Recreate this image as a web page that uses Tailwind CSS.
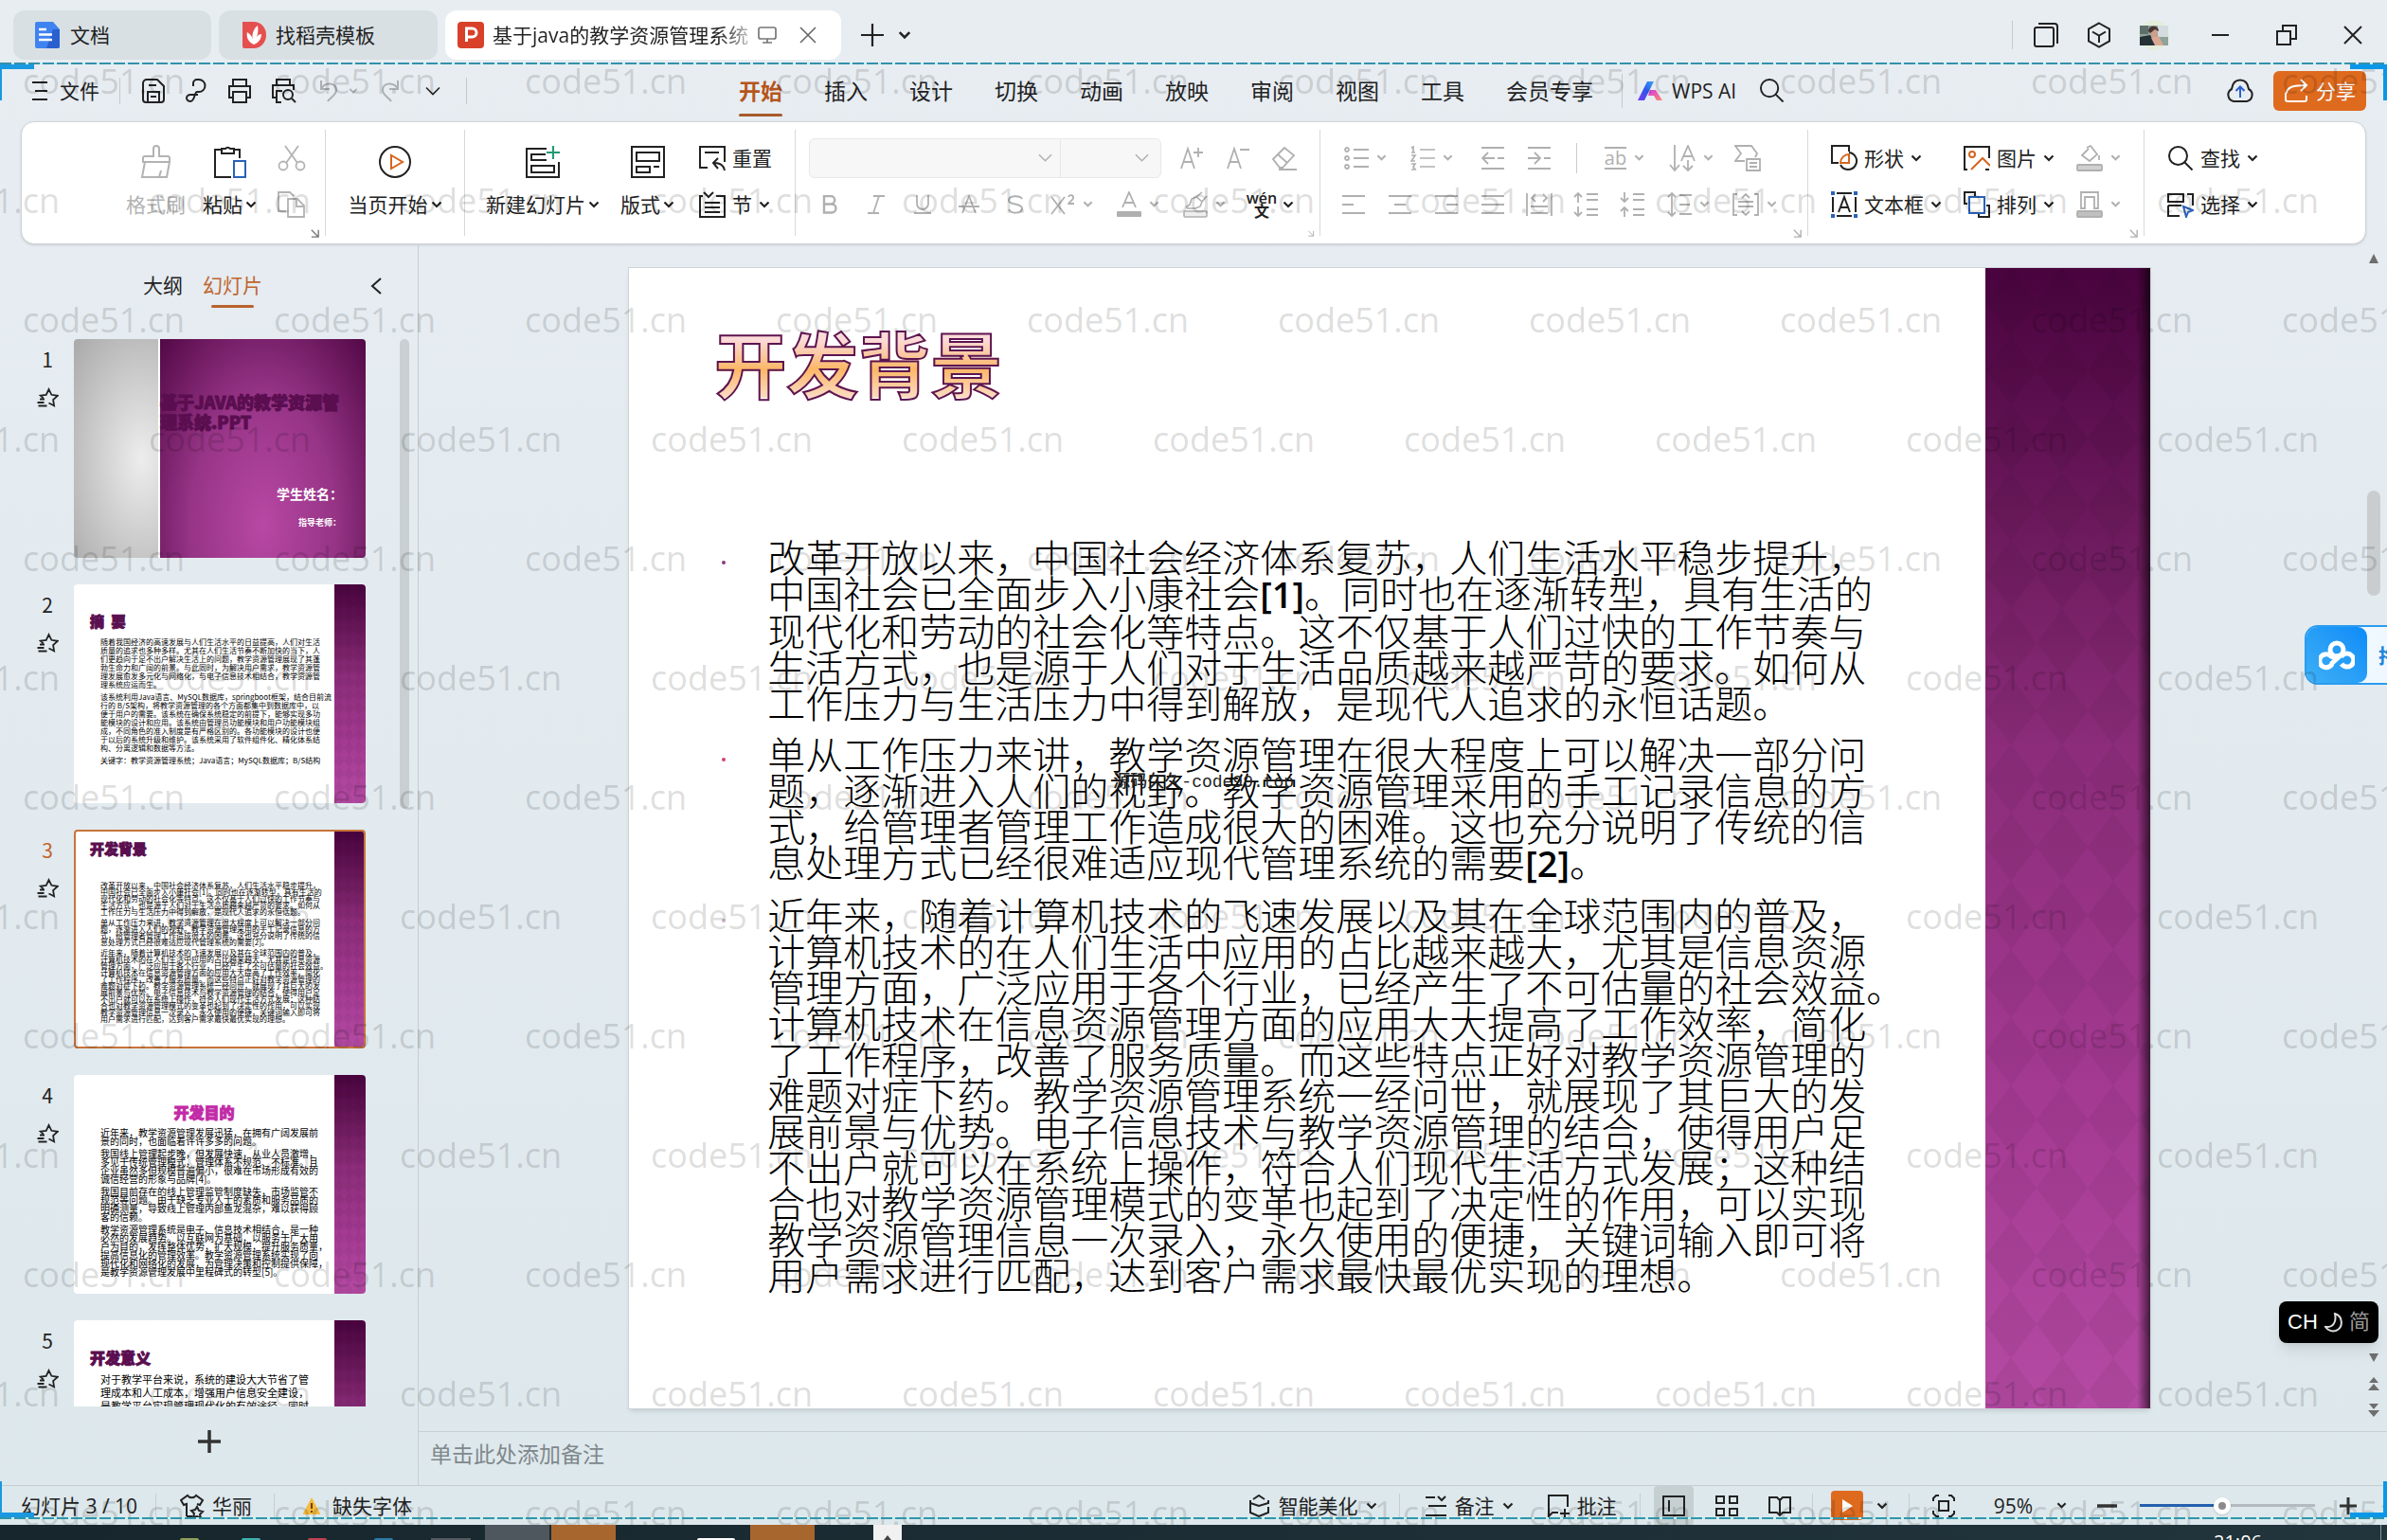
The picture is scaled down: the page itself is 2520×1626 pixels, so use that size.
<!DOCTYPE html>
<html lang="zh-CN">
<head>
  <meta charset="UTF-8" />
  <meta name="viewport" content="width=device-width, initial-scale=1.0"/>
  <title>基于java的教学资源管理系统 - WPS</title>
  <script src="https://cdn.jsdelivr.net/npm/@tailwindcss/browser@4"></script>
</head>
<body class="relative h-screen overflow-hidden flex flex-col bg-linear-to-b from-[#e8edf2] to-[#dde8ec] font-['Open_Sans','Noto_Sans_CJK_SC',sans-serif] text-[21px] leading-[28px] text-[#222]">

  <!-- Icon sprite -->
  <svg class="absolute size-0">
    <symbol id="chev" viewBox="0 0 12 12"><path d="M1.5 3.5 6 8l4.500-4.500" fill="none" stroke="currentColor" stroke-width="2.200"/></symbol>
    <symbol id="chev-thin" viewBox="0 0 16 16"><path d="M1 4.500 8 11.500l7-7" fill="none" stroke="currentColor" stroke-width="1.600"/></symbol>
    <symbol id="corner" viewBox="0 0 12 12"><path d="M2 2l8 8M10 2v8H2" fill="none" stroke="currentColor" stroke-width="1.500"/></symbol>
    <symbol id="star" viewBox="0 0 24 22"><path d="M17.500 18.500l1.600.9-1-6.300 4.700-4.300-6.400-1L13.500 2l-2.800 5.800-6 .8 3 2.800M17.500 18.500l-4-2M4 12.500h5M1.500 16h7M2.500 19.500h9" fill="none" stroke="currentColor" stroke-width="1.800"/></symbol>
    <symbol id="search" viewBox="0 0 28 28"><circle cx="11.500" cy="11.500" r="9.500" fill="none" stroke="currentColor" stroke-width="2"/><path d="M18.500 18.500l8 8" stroke="currentColor" stroke-width="2"/></symbol>
    <symbol id="band" viewBox="0 0 174 1205" preserveAspectRatio="none">
      <defs>
        <linearGradient id="bandFill" x1="0" y1="0" x2="0" y2="1">
          <stop offset="0" stop-color="#49033e"/><stop offset=".25" stop-color="#701c60"/><stop offset=".42" stop-color="#8c2c7a"/><stop offset=".75" stop-color="#a63b94"/><stop offset="1" stop-color="#b44aa3"/>
        </linearGradient>
        <pattern id="diamonds" width="54" height="72" patternUnits="userSpaceOnUse"><path d="M27 0l27 36-27 36L0 36z" fill="#000" fill-opacity=".05"/></pattern>
      </defs>
      <path d="M0 0h174v1205H0z" fill="url(#bandFill)"/>
      <path d="M0 0h174v1205H0z" fill="url(#diamonds)"/>
    </symbol>
  </svg>

  <!-- Document tabs -->
  <header class="h-[66px] shrink-0 flex items-center pt-[8px] pl-[14px] pr-[26px]">
    <button class="w-[209px] h-[52px] flex items-center pl-[21px] gap-[9px] rounded-xl bg-[#d9e0e4]">
      <svg class="w-[30px] h-[30px]" viewBox="0 0 30 30"><path d="M4 1h17l7 8v18a2 2 0 0 1-2 2H4a2 2 0 0 1-2-2V3a2 2 0 0 1 2-2z" fill="#3f83f0"/><path d="M21 9h7v18a2 2 0 0 1-2 2H14z" fill="#2a5fcf"/><path d="M6 9h8M6 14.500h14M6 20h14" stroke="#fff" stroke-width="2.400"/></svg>
      文档
    </button>
    <button class="ml-2 w-[231px] h-[52px] flex items-center pl-[23px] gap-[9px] rounded-xl bg-[#d9e0e4]">
      <svg class="w-[28px] h-[30px]" viewBox="0 0 28 30"><path d="M2 1h12a13 14 0 0 1 0 28H4a2 2 0 0 1-2-2z" fill="#e5504f"/><path d="M14 25c-7-3-8-9-7-13 3 2 5 4 5.500 7C12 13 14 8 18 5c1 6 0 9-1 12 1-2 3-3 5-3 0 5-3 9-8 11z" fill="#fff"/></svg>
      找稻壳模板
    </button>
    <div class="ml-2 w-[418px] h-[52px] flex items-center pl-[12px] rounded-xl bg-white">
      <svg class="w-[30px] h-[30px]" viewBox="0 0 30 30"><rect x="1" y="1" width="28" height="28" rx="4" fill="#d8402a"/><path d="M10.500 22V8h6a4.500 4.500 0 0 1 0 9h-6" fill="none" stroke="#fff" stroke-width="3"/></svg>
      <span class="ml-[8px] w-[272px] overflow-hidden whitespace-nowrap bg-linear-to-r from-[#222] from-88% to-[#ccc] bg-clip-text text-transparent">基于java的教学资源管理系统</span>
      <svg class="ml-[8px] w-[20px] h-[20px] text-[#777]" viewBox="0 0 20 20" fill="none" stroke="currentColor" stroke-width="1.700"><rect x="1" y="2" width="18" height="12" rx="2"/><path d="M10 14v4M5 18h10"/></svg>
      <button aria-label="关闭" class="ml-[24px]"><svg class="w-[18px] h-[18px] text-[#666]" viewBox="0 0 18 18" stroke="currentColor" stroke-width="1.600"><path d="M1 1l16 16M17 1L1 17"/></svg></button>
    </div>
    <button aria-label="新建" class="ml-[20px]"><svg class="w-[26px] h-[26px]" viewBox="0 0 26 26" stroke="currentColor" stroke-width="2.200"><path d="M13 1v24M1 13h24"/></svg></button>
    <svg class="ml-[14px] w-[14px] h-[14px]"><use href="#chev"/></svg>
    <div class="ml-auto flex items-center">
      <span class="w-px h-[30px] bg-[#c3c9cd]"></span>
      <button aria-label="窗口" class="ml-[21px]"><svg class="w-[28px] h-[28px]" viewBox="0 0 28 28" fill="none" stroke="currentColor" stroke-width="2"><rect x="2" y="6" width="20" height="20" rx="2"/><path d="M6 2h17a3 3 0 0 1 3 3v18"/></svg></button>
      <button aria-label="立方" class="ml-[28px]"><svg class="w-[28px] h-[28px]" viewBox="0 0 28 28" fill="none" stroke="currentColor" stroke-width="2"><path d="M14 1.500l11 6.200v12.600l-11 6.200-11-6.200V7.700zM7 10.500l7 4 7-4M14 14.500V22"/></svg></button>
      <svg class="ml-[28px] w-[32px] h-[36px]" viewBox="0 0 32 36"><circle cx="16" cy="18" r="16" fill="#e4eddc"/><path d="M1 8h30v21H1z" fill="#8fa39a"/><path d="M20 8h11v12H20z" fill="#d5dcdf"/><path d="M1 8h9v9H1z" fill="#5d6f6b"/><path d="M12 14c0-5 8-5 8 1l-1 6h-6z" fill="#caa08c"/><path d="M10 14c0-7 11-7 11 0l-4-2-5 4z" fill="#4a3431"/><path d="M1 20l11-2 6 11H1z" fill="#253036"/><path d="M13 21l8-2 5 10h-9z" fill="#d9a894"/></svg>
      <button aria-label="最小化" class="ml-[44px]"><svg class="w-[20px] h-[20px]" viewBox="0 0 20 20" stroke="currentColor" stroke-width="2"><path d="M1 10h18"/></svg></button>
      <button aria-label="还原" class="ml-[48px]"><svg class="w-[24px] h-[24px]" viewBox="0 0 24 24" fill="none" stroke="currentColor" stroke-width="2"><rect x="2" y="8" width="14" height="14"/><path d="M8 8V2h14v14h-6"/></svg></button>
      <button aria-label="退出" class="ml-[48px]"><svg class="w-[20px] h-[20px]" viewBox="0 0 20 20" stroke="currentColor" stroke-width="2"><path d="M1 1l18 18M19 1L1 19"/></svg></button>
    </div>
  </header>

  <!-- Menu bar -->
  <nav class="h-[62px] shrink-0 flex items-center pl-[34px] pr-[22px] pb-[3px]">
    <button class="flex items-center gap-[13px]">
      <svg class="w-[16px] h-[20px]" viewBox="0 0 16 20" stroke="currentColor" stroke-width="2"><path d="M0 1h16M3 10h13M0 19h16"/></svg>文件
    </button>
    <span class="ml-[21px] w-px h-[28px] bg-[#c3c9cd]"></span>
    <button aria-label="保存" class="ml-[22px]"><svg class="w-[26px] h-[26px]" viewBox="0 0 26 26" fill="none" stroke="currentColor" stroke-width="2"><path d="M6 1h11l7 7v14a3 3 0 0 1-3 3H5a3 3 0 0 1-3-3V5a4 4 0 0 1 4-4zM7 25V14h12v11M8 7h8M10 19h6"/></svg></button>
    <button aria-label="输出" class="ml-[19px]"><svg class="w-[26px] h-[26px]" viewBox="0 0 26 26" fill="none" stroke="currentColor" stroke-width="2"><path d="M10 8V5a4 4 0 0 1 4-4h2a6 6 0 0 1 0 13h-2c-3 0-2 10-7 10a4 3.500 0 0 1 0-7h8"/></svg></button>
    <button aria-label="打印" class="ml-[20px]"><svg class="w-[26px] h-[26px]" viewBox="0 0 26 26" fill="none" stroke="currentColor" stroke-width="2"><path d="M6 8V1h14v7M6 20H2V8h22v12h-4"/><path d="M6 14h14v11H6z"/></svg></button>
    <button aria-label="打印预览" class="ml-[20px]"><svg class="w-[28px] h-[26px]" viewBox="0 0 28 26" fill="none" stroke="currentColor" stroke-width="2"><path d="M6 7V1h14v6M6 20H2V7h22v5M6 20v-7h6M6 20v5h5"/><circle cx="18" cy="17" r="5"/><path d="M22 21l4 4"/></svg></button>
    <button aria-label="撤销" class="ml-[22px] flex items-center gap-[10px] text-[#aab0b4]"><svg class="w-[22px] h-[24px]" viewBox="0 0 22 24" fill="none" stroke="currentColor" stroke-width="2"><path d="M3 1v9h9M3 10c4-8 16-7 16 1 0 6-7 8-9 12"/></svg><svg class="w-[10px] h-[10px]"><use href="#chev"/></svg></button>
    <button aria-label="恢复" class="ml-[23px] text-[#aab0b4]"><svg class="w-[22px] h-[24px]" viewBox="0 0 22 24" fill="none" stroke="currentColor" stroke-width="2"><path d="M19 1v9h-9M19 10C15 2 3 3 3 11c0 6 7 8 9 12"/></svg></button>
    <svg class="ml-[26px] w-[16px] h-[16px]"><use href="#chev-thin"/></svg>
    <span class="ml-[27px] w-px h-[28px] bg-[#c3c9cd]"></span>

    <div class="ml-[287px] flex items-center gap-[44px] text-[23px] whitespace-nowrap">
      <a href="#" class="relative font-bold text-[#b5561c]">开始<span class="absolute left-0 right-0 top-[38px] h-[3px] rounded bg-[#a85a2c]"></span></a>
      <a href="#">插入</a>
      <a href="#">设计</a>
      <a href="#">切换</a>
      <a href="#">动画</a>
      <a href="#">放映</a>
      <a href="#">审阅</a>
      <a href="#">视图</a>
      <a href="#">工具</a>
      <a href="#">会员专享</a>
    </div>
    <span class="ml-[30px] w-px h-[36px] bg-[#c3c9cd]"></span>
    <a href="#" class="ml-[15px] flex items-center gap-[9px] whitespace-nowrap">
      <svg class="w-[28px] h-[22px]" viewBox="0 0 28 22"><defs><linearGradient id="aiBlue" x1="0" y1="1" x2="1" y2="0"><stop stop-color="#7a3bf0"/><stop offset=".5" stop-color="#2f55ee"/><stop offset="1" stop-color="#38a6f5"/></linearGradient><linearGradient id="aiPink" x1="0" y1="0" x2="1" y2="1"><stop stop-color="#d33be0"/><stop offset="1" stop-color="#ff8a70"/></linearGradient></defs><path d="M11 1h7L8 21H1z" fill="url(#aiBlue)"/><path d="M14 10h6l7 11h-6l-3-5h-6z" fill="url(#aiPink)"/></svg>
      WPS AI
    </a>
    <button aria-label="搜索" class="ml-[24px]"><svg class="w-[27px] h-[27px]"><use href="#search"/></svg></button>
    <button aria-label="云同步" class="ml-auto"><svg class="w-[30px] h-[26px]" viewBox="0 0 30 26" fill="none" stroke="currentColor" stroke-width="2"><path d="M8 24a7 7 0 0 1-2-13C7 4 10 1.500 15 1.500S23 4 24 11a7 7 0 0 1-2 13z"/><path d="M15 20V9M10.500 13L15 8.500l4.500 4.500" stroke="#2a5fcf"/></svg></button>
    <button class="ml-[20px] w-[98px] h-[42px] flex items-center justify-center gap-[8px] rounded-md bg-[#de6a1e] text-white">
      <svg class="w-[26px] h-[26px]" viewBox="0 0 26 26" fill="none" stroke="currentColor" stroke-width="2"><path d="M2 15v7a2 2 0 0 0 2 2h18a2 2 0 0 0 2-2v-4M3 15C4 9 9 7 24 7M18 1l6 6-6 6"/></svg>分享
    </button>
  </nav>

  <!-- Ribbon -->
  <section class="h-[130px] shrink-0 mx-[22px] flex rounded-[14px] bg-white border border-[#cfd4d7] shadow-sm whitespace-nowrap">
    <!-- Clipboard -->
    <div class="w-[320px] flex pt-[13px] pl-[110px]">
      <button class="w-[63px] flex flex-col items-center text-[#b3b3b3]">
        <span class="h-[49px] flex items-center pt-[8px]"><svg class="w-[34px] h-[36px]" viewBox="0 0 34 36" fill="none" stroke="currentColor" stroke-width="2"><path d="M14 12V4a3 3 0 0 1 6 0v8h9a2 2 0 0 1 2 2v4H3v-4a2 2 0 0 1 2-2zM5 18L2 34h26l3-16M20 34l2-7"/></svg></span>
        <span class="h-[49px] flex items-center">格式刷</span>
      </button>
      <button class="ml-[18px] flex flex-col items-center">
        <span class="h-[49px] flex items-center pt-[8px]"><svg class="w-[36px] h-[36px]" viewBox="0 0 36 36" fill="none" stroke="currentColor" stroke-width="2"><path d="M9 5H2v29h17M22 5h6v9M9 9V4h4a3 3 0 0 1 5 0h4v5z"/><path d="M22 17h12v17H22z" stroke="#2a62b8"/></svg></span>
        <span class="h-[49px] flex items-center gap-[3px]">粘贴<svg class="w-[12px] h-[12px]"><use href="#chev"/></svg></span>
      </button>
      <div class="ml-[22px] flex flex-col text-[#b3b3b3]">
        <button aria-label="剪切" class="h-[49px]"><svg class="w-[30px] h-[28px]" viewBox="0 0 30 28" fill="none" stroke="currentColor" stroke-width="1.800"><circle cx="6" cy="22" r="4.500"/><circle cx="24" cy="22" r="4.500"/><path d="M8 1l13 18M22 1L9 19"/></svg></button>
        <button aria-label="复制" class="h-[49px]"><svg class="w-[30px] h-[30px]" viewBox="0 0 30 30" fill="none" stroke="currentColor" stroke-width="1.800"><path d="M9 22H1V2h12l4 4M11 9h10l7 7v12H11zM20 9v8h8"/></svg></button>
      </div>
      <svg class="ml-auto mr-[5px] mt-[99px] w-[11px] h-[11px] text-[#777]"><use href="#corner"/></svg>
    </div>
    <span class="w-px my-2 bg-[#d6d9db]"></span>

    <!-- Slideshow -->
    <div class="w-[146px] flex pt-[13px] justify-center">
      <button class="flex flex-col items-center">
        <span class="h-[49px] flex items-center pt-[8px]"><svg class="w-[36px] h-[36px]" viewBox="0 0 36 36" fill="none" stroke="currentColor" stroke-width="2"><circle cx="18" cy="18" r="16"/><path d="M14 11v14l12-7z" stroke="#d4661f"/></svg></span>
        <span class="h-[49px] flex items-center gap-[3px]">当页开始<svg class="w-[12px] h-[12px]"><use href="#chev"/></svg></span>
      </button>
    </div>
    <span class="w-px my-2 bg-[#d6d9db]"></span>

    <!-- Slides -->
    <div class="w-[348px] flex pt-[13px] pl-[22px]">
      <button class="flex flex-col items-center">
        <span class="h-[49px] flex items-center pt-[8px]"><svg class="w-[38px] h-[36px]" viewBox="0 0 38 36" fill="none" stroke="currentColor" stroke-width="2"><path d="M23 4H2v30h34V18M7 22h24v7H7zM22 10H7v6h16"/><path d="M30 1v14M23 8h14" stroke="#1d9a74"/></svg></span>
        <span class="h-[49px] flex items-center gap-[3px]">新建幻灯片<svg class="w-[12px] h-[12px]"><use href="#chev"/></svg></span>
      </button>
      <button class="ml-[22px] flex flex-col items-center">
        <span class="h-[49px] flex items-center pt-[8px]"><svg class="w-[36px] h-[34px]" viewBox="0 0 36 34" fill="none" stroke="currentColor" stroke-width="2"><path d="M1 1h34v32H1zM6 7h24v9H6zM6 22h14v6H6zM24 22h6"/></svg></span>
        <span class="h-[49px] flex items-center gap-[3px]">版式<svg class="w-[12px] h-[12px]"><use href="#chev"/></svg></span>
      </button>
      <div class="ml-[26px] flex flex-col items-start">
        <button class="h-[49px] flex items-center gap-[7px]"><svg class="w-[28px] h-[28px]" viewBox="0 0 28 28" fill="none" stroke="currentColor" stroke-width="2"><path d="M9 24H1V2h26v16M6 8h15M27 27c-1-6-5-8-11-8M20 14l-5 5 5 6"/></svg>重置</button>
        <button class="h-[49px] flex items-center gap-[7px]"><svg class="w-[28px] h-[28px]" viewBox="0 0 28 28" fill="none" stroke="currentColor" stroke-width="2"><path d="M4 5H1v22h26V5h-9M5 1l5 5 5-5M6 12h16M6 17h16M6 22h16"/></svg>节<svg class="w-[12px] h-[12px]"><use href="#chev"/></svg></button>
      </div>
    </div>
    <span class="w-px my-2 bg-[#d6d9db]"></span>

    <!-- Font -->
    <div class="w-[553px] flex pt-[13px] text-[#b0b0b0]">
      <div class="flex flex-col">
        <div class="h-[49px] flex items-center pl-[14px]">
          <div class="flex items-center w-[372px] h-[42px] rounded-md border border-[#e8e8e8] bg-[#f7f7f7]">
            <select aria-label="字体" disabled class="appearance-none flex-1 h-full"></select>
            <svg class="mr-[8px] w-[15px] h-[15px]"><use href="#chev-thin"/></svg>
            <span class="w-px h-full bg-[#e8e8e8]"></span>
            <select aria-label="字号" disabled class="appearance-none w-[78px] h-full"></select>
            <svg class="mr-[12px] w-[15px] h-[15px]"><use href="#chev-thin"/></svg>
          </div>
          <button aria-label="增大字号" class="w-[49px] ml-[7px] flex justify-center"><svg class="w-[26px] h-[26px]" viewBox="0 0 26 26" fill="none" stroke="currentColor" stroke-width="1.800"><path d="M2 24L9 3l7 21M4.500 17h9M20 2v10M15 7h10"/></svg></button>
          <button aria-label="减小字号" class="w-[49px] flex justify-center"><svg class="w-[26px] h-[26px]" viewBox="0 0 26 26" fill="none" stroke="currentColor" stroke-width="1.800"><path d="M2 24L9 3l7 21M4.500 17h9M15 4h10"/></svg></button>
          <button aria-label="清除格式" class="w-[49px] flex justify-center"><svg class="w-[28px] h-[26px]" viewBox="0 0 28 26" fill="none" stroke="currentColor" stroke-width="1.800"><path d="M2 14L14 2l10 8-12 13H9zM7 9l10 9M8 25h19"/></svg></button>
        </div>
        <div class="h-[49px] flex items-center pl-[11px]">
          <button aria-label="加粗" class="w-[49px] flex justify-center"><svg class="w-[16px] h-[20px]" viewBox="0 0 16 20" fill="none" stroke="currentColor" stroke-width="2.400"><path d="M2 1h7a4 4 0 0 1 0 8.500H2zM2 9.500h8a4.500 4.500 0 0 1 0 9H2z"/></svg></button>
          <button aria-label="倾斜" class="w-[49px] flex justify-center"><svg class="w-[20px] h-[20px]" viewBox="0 0 20 20" fill="none" stroke="currentColor" stroke-width="1.800"><path d="M7 1h12M1 19h12M13 1L7 19"/></svg></button>
          <button aria-label="下划线" class="w-[49px] flex justify-center"><svg class="w-[20px] h-[20px]" viewBox="0 0 20 20" fill="none" stroke="currentColor" stroke-width="1.800"><path d="M4 0v9a6 6 0 0 0 12 0V0M1 19h18"/></svg></button>
          <button aria-label="删除线" class="w-[49px] flex justify-center"><svg class="w-[22px] h-[20px]" viewBox="0 0 22 20" fill="none" stroke="currentColor" stroke-width="1.800"><path d="M4 19L11 1l7 18M0 12h22"/></svg></button>
          <button aria-label="阴影" class="w-[49px] flex justify-center"><svg class="w-[18px] h-[20px]" viewBox="0 0 18 20" fill="none" stroke="currentColor" stroke-width="2"><path d="M16 4C14 0 2 0 2 5.500 2 11 16 8 16 14c0 6-12 6-14 1"/></svg></button>
          <button aria-label="上标" class="w-[70px] flex justify-center items-center gap-[8px]"><svg class="w-[26px] h-[22px]" viewBox="0 0 26 22" fill="none" stroke="currentColor" stroke-width="1.800"><path d="M1 3l14 18M15 3L1 21M19 3c1-3 6-2 5 1 0 2-5 5-5 6h6"/></svg><svg class="w-[11px] h-[11px]"><use href="#chev"/></svg></button>
          <button aria-label="字体颜色" class="w-[70px] flex justify-center items-center gap-[8px]"><svg class="w-[26px] h-[28px]" viewBox="0 0 26 28" fill="none" stroke="currentColor" stroke-width="1.800"><path d="M6 17L13 1l7 16M8.500 12h9"/><rect x="0" y="21" width="26" height="6" rx="1" fill="currentColor" stroke="none"/></svg><svg class="w-[11px] h-[11px]"><use href="#chev"/></svg></button>
          <button aria-label="突出显示" class="w-[70px] flex justify-center items-center gap-[8px]"><svg class="w-[26px] h-[28px]" viewBox="0 0 26 28" fill="none" stroke="currentColor" stroke-width="1.600"><path d="M3 17l4-3 2-6 5-2 6 5-2 5-5 2H4M14 6l6-5M20 11l5-6"/><rect x="1" y="21" width="24" height="6" rx="1" fill="#eee"/></svg><svg class="w-[11px] h-[11px]"><use href="#chev"/></svg></button>
          <button class="w-[70px] flex justify-center items-center gap-[6px] text-[#222]"><span class="flex flex-col items-center text-[16px] leading-[14px] font-semibold"><span>wén</span><span>文</span></span><svg class="w-[12px] h-[12px]"><use href="#chev"/></svg></button>
        </div>
      </div>
      <svg class="ml-auto mr-[5px] mt-[99px] w-[11px] h-[11px]"><use href="#corner"/></svg>
    </div>
    <span class="w-px my-2 bg-[#d6d9db]"></span>

    <!-- Paragraph -->
    <div class="w-[514px] flex pt-[13px] text-[#b0b0b0]">
      <div class="flex flex-col">
        <div class="h-[49px] flex items-center pl-[12px]">
          <button aria-label="项目符号" class="w-[70px] flex justify-center items-center gap-[8px]"><svg class="w-[26px] h-[24px]" viewBox="0 0 26 24" fill="none" stroke="currentColor" stroke-width="1.800"><circle cx="3" cy="3" r="2"/><circle cx="3" cy="12" r="2"/><circle cx="3" cy="21" r="2"/><path d="M10 3h16M10 12h16M10 21h16"/></svg><svg class="w-[11px] h-[11px]"><use href="#chev"/></svg></button>
          <button aria-label="编号" class="w-[70px] flex justify-center items-center gap-[8px]"><svg class="w-[26px] h-[26px]" viewBox="0 0 26 26" fill="none" stroke="currentColor" stroke-width="1.700"><path d="M1 2l2-1v6M1 7h4M1 10h4l-4 6h4M1 19h4l-2 3 2 3H1M10 4h16M10 13h16M10 22h16"/></svg><svg class="w-[11px] h-[11px]"><use href="#chev"/></svg></button>
          <button aria-label="减少缩进" class="ml-[5px] w-[49px] flex justify-center"><svg class="w-[24px] h-[24px]" viewBox="0 0 24 24" fill="none" stroke="currentColor" stroke-width="1.800"><path d="M0 1h24M0 23h24M1 12h13M7 6l-6 6 6 6M17 12h7"/></svg></button>
          <button aria-label="增加缩进" class="w-[49px] flex justify-center"><svg class="w-[24px] h-[24px]" viewBox="0 0 24 24" fill="none" stroke="currentColor" stroke-width="1.800"><path d="M0 1h24M0 23h24M0 12h12M7 6l6 6-6 6M17 12h7"/></svg></button>
          <span class="mx-[15px] w-px h-[32px] bg-[#ccc]"></span>
          <button class="w-[70px] flex justify-center items-center gap-[8px]"><span class="border-y-2 border-[#b0b0b0] text-[20px] leading-[20px]">ab</span><svg class="w-[11px] h-[11px]"><use href="#chev"/></svg></button>
          <button aria-label="文字方向" class="w-[70px] flex justify-center items-center gap-[8px]"><svg class="w-[28px] h-[28px]" viewBox="0 0 28 28" fill="none" stroke="currentColor" stroke-width="1.800"><path d="M6 0v26M1 21l5 6 5-6M13 17L20 1l7 16M15 12h10M20 16v10M15 22l5 5 5-5"/></svg><svg class="w-[11px] h-[11px]"><use href="#chev"/></svg></button>
          <button aria-label="转智能图形" class="w-[49px] flex justify-center"><svg class="w-[28px] h-[28px]" viewBox="0 0 28 28" fill="none" stroke="currentColor" stroke-width="1.800"><path d="M11 17H1l6-8-6-8h17l6 8-2 4M13 15h14v12H13zM16 19h8M16 23h8"/></svg></button>
        </div>
        <div class="h-[49px] flex items-center pl-[10px]">
          <button aria-label="左对齐" class="w-[49px] flex justify-center"><svg class="w-[24px] h-[20px]" viewBox="0 0 24 20" stroke="currentColor" stroke-width="1.800"><path d="M0 1h24M0 10h12M0 19h24"/></svg></button>
          <button aria-label="居中" class="w-[49px] flex justify-center"><svg class="w-[24px] h-[20px]" viewBox="0 0 24 20" stroke="currentColor" stroke-width="1.800"><path d="M0 1h24M6 10h12M0 19h24"/></svg></button>
          <button aria-label="右对齐" class="w-[49px] flex justify-center"><svg class="w-[24px] h-[20px]" viewBox="0 0 24 20" stroke="currentColor" stroke-width="1.800"><path d="M0 1h24M12 10h12M0 19h24"/></svg></button>
          <button aria-label="两端对齐" class="w-[49px] flex justify-center"><svg class="w-[24px] h-[20px]" viewBox="0 0 24 20" stroke="currentColor" stroke-width="1.800"><path d="M0 1h24M0 10h24M0 19h24"/></svg></button>
          <button aria-label="分散对齐" class="w-[49px] flex justify-center"><svg class="w-[28px] h-[24px]" viewBox="0 0 28 24" fill="none" stroke="currentColor" stroke-width="1.800"><path d="M1 0v24M27 0v24M5 14h18M5 21h18M10 1L6 5l4 4M18 1l4 4-4 4"/></svg></button>
          <button aria-label="增大段距" class="w-[49px] flex justify-center"><svg class="w-[26px] h-[26px]" viewBox="0 0 26 26" fill="none" stroke="currentColor" stroke-width="1.800"><path d="M14 2h12M14 8h12M14 18h12M14 24h12M5 11V1M1 5l4-4 4 4M5 15v10M1 21l4 4 4-4"/></svg></button>
          <button aria-label="减小段距" class="w-[49px] flex justify-center"><svg class="w-[26px] h-[26px]" viewBox="0 0 26 26" fill="none" stroke="currentColor" stroke-width="1.800"><path d="M14 2h12M14 8h12M14 18h12M14 24h12M5 0v10M1 6l4 4 4-4M5 26V16M1 20l4-4 4 4"/></svg></button>
          <button aria-label="行距" class="w-[70px] flex justify-center items-center gap-[8px]"><svg class="w-[26px] h-[26px]" viewBox="0 0 26 26" fill="none" stroke="currentColor" stroke-width="1.800"><path d="M13 3h13M13 13h11M13 23h13M5 1v24M1 5l4-4 4 4M1 21l4 4 4-4"/></svg><svg class="w-[11px] h-[11px]"><use href="#chev"/></svg></button>
          <button aria-label="对齐文本" class="w-[70px] flex justify-center items-center gap-[8px]"><svg class="w-[28px] h-[26px]" viewBox="0 0 28 26" fill="none" stroke="currentColor" stroke-width="1.800"><path d="M5 2H1v22h4M23 2h4v22h-4M6 10h16M6 15h16M10 6l4-4 4 4M10 20l4 4 4-4"/></svg><svg class="w-[11px] h-[11px]"><use href="#chev"/></svg></button>
        </div>
      </div>
      <svg class="ml-auto mr-[5px] mt-[99px] w-[11px] h-[11px]"><use href="#corner"/></svg>
    </div>
    <span class="w-px my-2 bg-[#d6d9db]"></span>

    <!-- Drawing -->
    <div class="w-[354px] flex pt-[13px] pl-[24px]">
      <div class="w-[140px] flex flex-col items-start">
        <button class="h-[49px] flex items-center gap-[7px]"><svg class="w-[28px] h-[28px]" viewBox="0 0 28 28" fill="none" stroke="currentColor" stroke-width="2"><path d="M8 19H1V1h18v6M19 8a9 9 0 1 1-9 13"/><path d="M10 19a9 9 0 0 1 9-9v9z" stroke="#d4661f"/></svg>形状<svg class="w-[12px] h-[12px]"><use href="#chev"/></svg></button>
        <button class="h-[49px] flex items-center gap-[7px]"><svg class="w-[28px] h-[28px]" viewBox="0 0 28 28" fill="none" stroke="currentColor" stroke-width="2"><path d="M6 2h16M6 26h16M2 6v16M26 6v16M8 22l6-16 6 16M10 17h8"/><path d="M0 0h4v4H0zM24 0h4v4h-4zM0 24h4v4H0zM24 24h4v4h-4z" fill="#2a62b8" stroke="none"/></svg>文本框<svg class="w-[12px] h-[12px]"><use href="#chev"/></svg></button>
      </div>
      <div class="w-[119px] flex flex-col items-start">
        <button class="h-[49px] flex items-center gap-[7px]"><svg class="w-[28px] h-[28px]" viewBox="0 0 28 28" fill="none" stroke="currentColor" stroke-width="2"><path d="M4 26H1V2h26v12M23 26h4"/><circle cx="9" cy="10" r="3" stroke="#d4661f"/><path d="M8 26l12-12 8 8" stroke="#d4661f"/></svg>图片<svg class="w-[12px] h-[12px]"><use href="#chev"/></svg></button>
        <button class="h-[49px] flex items-center gap-[7px]"><svg class="w-[28px] h-[28px]" viewBox="0 0 28 28" fill="none" stroke="currentColor" stroke-width="2"><path d="M4 13H1V1h11v4M24 15h3v12H16v-4"/><path d="M6 6h16v17H6z" stroke="#2a62b8"/></svg>排列<svg class="w-[12px] h-[12px]"><use href="#chev"/></svg></button>
      </div>
      <div class="flex flex-col text-[#b0b0b0]">
        <button aria-label="填充" class="h-[49px] flex items-center gap-[8px]"><svg class="w-[28px] h-[28px]" viewBox="0 0 28 28" fill="none" stroke="currentColor" stroke-width="1.800"><path d="M11 3l4-2 7 9-8 7-8-6 7-7M24 11v5"/><rect x="1" y="21" width="26" height="6" rx="1" fill="#d0d0d0"/></svg><svg class="w-[11px] h-[11px]"><use href="#chev"/></svg></button>
        <button aria-label="轮廓" class="h-[49px] flex items-center gap-[8px]"><svg class="w-[28px] h-[28px]" viewBox="0 0 28 28" fill="none" stroke="currentColor" stroke-width="1.800"><path d="M5 18V1h18v17h-4V6H9v12z"/><rect x="1" y="21" width="26" height="6" rx="1" fill="#c0c0c0"/></svg><svg class="w-[11px] h-[11px]"><use href="#chev"/></svg></button>
      </div>
      <svg class="ml-auto mr-[5px] mt-[99px] w-[11px] h-[11px] text-[#b0b0b0]"><use href="#corner"/></svg>
    </div>
    <span class="w-px my-2 bg-[#d6d9db]"></span>

    <!-- Editing -->
    <div class="flex-1 flex flex-col items-start pt-[13px] pl-[24px]">
      <button class="h-[49px] flex items-center gap-[7px]"><svg class="w-[28px] h-[28px]"><use href="#search"/></svg>查找<svg class="w-[12px] h-[12px]"><use href="#chev"/></svg></button>
      <button class="h-[49px] flex items-center gap-[7px]"><svg class="w-[28px] h-[28px]" viewBox="0 0 28 28" fill="none" stroke="currentColor" stroke-width="2"><path d="M1 3h16v8H1zM21 3h6v12M1 15v11h12M1 15h14"/><path d="M17 16l10 4-5 2-2 5z" stroke="#2a62b8"/></svg>选择<svg class="w-[12px] h-[12px]"><use href="#chev"/></svg></button>
    </div>
  </section>

  <!-- Workspace -->
  <div class="flex-1 min-h-0 flex">

    <!-- Slide list -->
    <aside class="w-[442px] shrink-0 flex flex-col border-r border-[#c6ced2]">
      <div class="h-[100px] shrink-0 flex items-start pt-[29px] pl-[151px] pr-[38px]">
        <button>大纲</button>
        <button class="relative ml-[21px] text-[#bf6630]">幻灯片<span class="absolute left-[9px] right-[9px] top-[35px] h-[3px] rounded bg-[#b8622c]"></span></button>
        <button aria-label="收起" class="ml-auto mt-[6px]"><svg class="w-[12px] h-[18px]" viewBox="0 0 12 18" fill="none" stroke="currentColor" stroke-width="2"><path d="M11 1L2 9l9 8"/></svg></button>
      </div>
      <div class="flex-1 min-h-0 flex justify-between pl-[29px] pr-[9px]">
        <ol class="flex flex-col gap-[28px] overflow-hidden font-['Noto_Sans_CJK_SC',sans-serif]">
          <li class="flex gap-[7px]">
            <div class="w-[42px] pt-[7px] flex flex-col items-center gap-[16px]">1<svg class="w-[24px] h-[22px]"><use href="#star"/></svg></div>
            <div class="w-[308px] h-[231px] flex gap-[2px] rounded bg-white overflow-hidden">
              <div class="w-[89px] bg-radial-[at_80%_55%] from-[#ededed] to-[#a9a9a9]"></div>
              <div class="flex-1 bg-radial-[at_50%_85%] from-[#b848a4] via-[#963486] to-[#520846] whitespace-nowrap">
                <h3 class="pt-[56px] text-[18px] leading-[21px] font-black text-[#5a0e50] [-webkit-text-stroke:1px_#5a0e50]">基于JAVA的教学资源管<br>理系统.PPT</h3>
                <p class="pt-[56px] pr-[24px] text-right text-[14px] leading-[18px] font-bold text-white">学生姓名：</p>
                <p class="pt-[15px] pr-[26px] text-right text-[9px] leading-[14px] font-bold text-white">指导老师：</p>
              </div>
            </div>
          </li>
          <li class="flex gap-[7px]">
            <div class="w-[42px] pt-[7px] flex flex-col items-center gap-[16px]">2<svg class="w-[24px] h-[22px]"><use href="#star"/></svg></div>
            <div class="w-[308px] h-[231px] flex rounded bg-white overflow-hidden">
              <div class="w-[275px] whitespace-nowrap">
                <h3 class="pt-[30px] pl-[17px] text-[15px] leading-[18px] font-black text-[#5a0e50] [-webkit-text-stroke:1px_#5a0e50]">摘&ensp;要</h3>
                <ul class="pt-[8px] pl-[28px] flex flex-col gap-[4px] text-[8px] leading-[9px] text-black">
                  <li>随着我国经济的高速发展与人们生活水平的日益提高，人们对生活<br>质量的追求也多种多样。尤其在人们生活节奏不断加快的当下，人<br>们更趋向于足不出户解决生活上的问题，教学资源管理展现了其蓬<br>勃生命力和广阔的前景。与此同时，为解决用户需求，教学资源管<br>理发展愈发多元化与网络化，与电子信息技术相结合，教学资源管<br>理系统应运而生。</li>
                  <li>该系统利用Java语言、MySQL数据库，springboot框架，结合目前流<br>行的 B/S架构，将教学资源管理的各个方面都集中到数据库中，以<br>便于用户的需要。该系统在确保系统稳定的前提下，能够实现多功<br>能模块的设计和应用。该系统由管理员功能模块和用户功能模块组<br>成，不同角色的准入制度是有严格区别的。各功能模块的设计也便<br>于以后的系统升级和维护。该系统采用了软件组件化、精化体系结<br>构、分离逻辑和数据等方法。</li>
                  <li>关键字：教学资源管理系统；Java语言；MySQL数据库；B/S结构</li>
                </ul>
              </div>
              <svg class="flex-1 h-full"><use href="#band"/></svg>
            </div>
          </li>
          <li class="flex gap-[7px]">
            <div class="w-[42px] pt-[7px] flex flex-col items-center gap-[16px] text-[#c2652a]">3<svg class="w-[24px] h-[22px] text-[#222]"><use href="#star"/></svg></div>
            <div class="w-[308px] h-[231px] flex rounded bg-white overflow-hidden border-2 border-[#c9743a]">
              <div class="w-[273px] whitespace-nowrap">
                <h3 class="pt-[9px] pl-[15px] text-[15px] leading-[18px] font-black text-[#5a0e50] [-webkit-text-stroke:1px_#5a0e50]">开发背景</h3>
                <ul class="pt-[26px] pl-[26px] flex flex-col gap-[4px] text-[8px] leading-[7px] text-black">
                  <li>改革开放以来，中国社会经济体系复苏，人们生活水平稳步提升，<br>中国社会已全面步入小康社会[1]。同时也在逐渐转型，具有生活的<br>现代化和劳动的社会化等特点。这不仅基于人们过快的工作节奏与<br>生活方式，也是源于人们对于生活品质越来越严苛的要求。如何从<br>工作压力与生活压力中得到解放，是现代人追求的永恒话题。</li>
                  <li>单从工作压力来讲，教学资源管理在很大程度上可以解决一部分问<br>题，逐渐进入人们的视野。教学资源管理采用的手工记录信息的方<br>式，给管理者管理工作造成很大的困难。这也充分说明了传统的信<br>息处理方式已经很难适应现代管理系统的需要[2]。</li>
                  <li>近年来，随着计算机技术的飞速发展以及其在全球范围内的普及，<br>计算机技术的在人们生活中应用的占比越来越大，尤其是信息资源<br>管理方面，广泛应用于各个行业，已经产生了不可估量的社会效益。<br>计算机技术在信息资源管理方面的应用大大提高了工作效率，简化<br>了工作程序，改善了服务质量。而这些特点正好对教学资源管理的<br>难题对症下药。教学资源管理系统一经问世，就展现了其巨大的发<br>展前景与优势。电子信息技术与教学资源管理的结合，使得用户足<br>不出户就可以在系统上操作，符合人们现代生活方式发展；这种结<br>合也对教学资源管理模式的变革也起到了决定性的作用，可以实现<br>教学资源管理信息一次录入，永久使用的便捷，关键词输入即可将<br>用户需求进行匹配，达到客户需求最快最优实现的理想。</li>
                </ul>
              </div>
              <svg class="flex-1 h-full"><use href="#band"/></svg>
            </div>
          </li>
          <li class="flex gap-[7px]">
            <div class="w-[42px] pt-[7px] flex flex-col items-center gap-[16px]">4<svg class="w-[24px] h-[22px]"><use href="#star"/></svg></div>
            <div class="w-[308px] h-[231px] flex rounded bg-white overflow-hidden">
              <div class="w-[275px] whitespace-nowrap">
                <h3 class="pt-[30px] text-center text-[16px] leading-[18px] font-black text-[#c22ba8] [-webkit-text-stroke:1px_#c22ba8]">开发目的</h3>
                <ul class="pt-[8px] pl-[28px] flex flex-col gap-[4px] text-[10px] leading-[9px] text-black">
                  <li>近年来，教学资源管理发展迅猛，在拥有广阔发展前<br>景的同时，也面临着许许多多的问题。</li>
                  <li>我国线上管理起步晚，但发展快速，从业人员激增，<br>多见于传统管理模式，管理体系不规范、不标准。且<br>企业虽然多但规模普遍偏小，很难在市场形成有效的<br>诚信经营的形象与品牌[4]。</li>
                  <li>我国目前存在的线上管理监管制度缺失，市场监管不<br>规范等问题。由于缺乏专业人士的素质和服务品质的<br>明确测量，导致线上管理内部鱼龙混杂，难以获得顾<br>客的信赖。</li>
                  <li>教学资源管理系统是电子、信息技术相结合，是一种<br>必然的发展趋势。以互联网为基础，以服务于广大用<br>户为目的，发挥整体优势，扩大规模，提升服务质量，<br>提高信息化的管理效率。教学资源管理系统实现了向<br>现代化和网络化的发展，为管理决策和控制提供保障，<br>是教学资源管理发展中里程碑式的转型[5]。</li>
                </ul>
              </div>
              <svg class="flex-1 h-full"><use href="#band"/></svg>
            </div>
          </li>
          <li class="flex gap-[7px]">
            <div class="w-[42px] pt-[7px] flex flex-col items-center gap-[16px]">5<svg class="w-[24px] h-[22px]"><use href="#star"/></svg></div>
            <div class="w-[308px] h-[231px] flex rounded bg-white overflow-hidden">
              <div class="w-[275px] whitespace-nowrap">
                <h3 class="pt-[30px] pl-[17px] text-[16px] leading-[18px] font-black text-[#5a0e50] [-webkit-text-stroke:1px_#5a0e50]">开发意义</h3>
                <p class="pt-[7px] pl-[28px] text-[11px] leading-[14px] text-black">对于教学平台来说，系统的建设大大节省了管<br>理成本和人工成本，增强用户信息安全建设，<br>是教学平台实现管理现代化的有效途径，同时</p>
              </div>
              <svg class="flex-1 h-full"><use href="#band"/></svg>
            </div>
          </li>
        </ol>
        <span class="w-[10px] h-[496px] rounded-full bg-[#c9cfd2]"></span>
      </div>
      <button aria-label="新建幻灯片" class="h-[83px] pb-[9px] flex items-center justify-center"><svg class="w-[24px] h-[24px]" viewBox="0 0 24 24" stroke="#333" stroke-width="3.500"><path d="M12 0v24M0 12h24"/></svg></button>
    </aside>

    <!-- Editing area -->
    <main class="flex-1 min-w-0 flex flex-col">
      <div class="flex-1 min-h-0 flex">
        <div class="flex-1 pt-[25px] pb-6 flex justify-center">
          <article class="relative h-full aspect-[4/3] flex bg-white shadow-md outline outline-[#cdd3d6] font-['Noto_Sans_CJK_SC',sans-serif]">
            <div class="flex-1 min-w-0 whitespace-nowrap">
              <h1 class="w-fit pt-[61px] ml-[90px] text-[76px] leading-[76px] font-bold bg-linear-to-b from-[#fbdad8] from-55% via-[#fbb765] via-78% to-[#fbdcc4] bg-clip-text text-transparent [-webkit-text-stroke:2px_#5c1450]">开发背景</h1>
              <ul class="mt-[148px] pl-[98px] flex flex-col gap-[16px] text-[40px] leading-[38px] font-light text-black">
                <li class="grid grid-cols-[48px_1fr]"><span class="mt-[24px] size-[4px] rounded-full bg-[#8a3a80]"></span><p>改革开放以来，中国社会经济体系复苏，人们生活水平稳步提升，<br>中国社会已全面步入小康社会<span class="font-['Open_Sans'] font-semibold text-[38px] leading-none">[1]</span>。同时也在逐渐转型，具有生活的<br>现代化和劳动的社会化等特点。这不仅基于人们过快的工作节奏与<br>生活方式，也是源于人们对于生活品质越来越严苛的要求。如何从<br>工作压力与生活压力中得到解放，是现代人追求的永恒话题。</p></li>
                <li class="grid grid-cols-[48px_1fr]"><span class="mt-[24px] size-[4px] rounded-full bg-[#d0407a]"></span><p>单从工作压力来讲，教学资源管理在很大程度上可以解决一部分问<br>题，逐渐进入人们的视野。教学资源管理采用的手工记录信息的方<br>式，给管理者管理工作造成很大的困难。这也充分说明了传统的信<br>息处理方式已经很难适应现代管理系统的需要<span class="font-['Open_Sans'] font-semibold text-[38px] leading-none">[2]</span>。</p></li>
                <li class="grid grid-cols-[48px_1fr]"><span class="mt-[24px] size-[4px] rounded-full bg-[#c9b0c6]"></span><p>近年来，随着计算机技术的飞速发展以及其在全球范围内的普及，<br>计算机技术的在人们生活中应用的占比越来越大，尤其是信息资源<br>管理方面，广泛应用于各个行业，已经产生了不可估量的社会效益。<br>计算机技术在信息资源管理方面的应用大大提高了工作效率，简化<br>了工作程序，改善了服务质量。而这些特点正好对教学资源管理的<br>难题对症下药。教学资源管理系统一经问世，就展现了其巨大的发<br>展前景与优势。电子信息技术与教学资源管理的结合，使得用户足<br>不出户就可以在系统上操作，符合人们现代生活方式发展；这种结<br>合也对教学资源管理模式的变革也起到了决定性的作用，可以实现<br>教学资源管理信息一次录入，永久使用的便捷，关键词输入即可将<br>用户需求进行匹配，达到客户需求最快最优实现的理想。</p></li>
              </ul>
            </div>
            <div class="w-[174px] shrink-0 flex relative">
              <svg class="w-full h-full"><use href="#band"/></svg>
              <span class="absolute inset-y-0 right-0 w-[14px] bg-linear-to-r from-transparent to-black/60"></span>
            </div>
            <span class="absolute left-[511px] top-[531px] text-[18px] leading-[24px] font-medium text-[#222] font-['Liberation_Mono','Noto_Sans_CJK_SC',monospace] whitespace-nowrap">源码久久-code99.top</span>
          </article>
        </div>
        <div class="w-[28px] shrink-0 flex flex-col items-center text-[#6e6e6e]">
          <svg class="mt-[10px] w-[10px] h-[10px]" viewBox="0 0 10 10"><path d="M5 0l5 10H0z" fill="currentColor"/></svg>
          <span class="mt-[240px] w-[14px] h-[111px] rounded-full bg-[#c9cdd0]"></span>
          <svg class="mt-auto w-[10px] h-[9px]" viewBox="0 0 10 9"><path d="M0 0h10L5 9z" fill="currentColor"/></svg>
          <svg class="mt-[16px] w-[12px] h-[14px]" viewBox="0 0 12 14"><path d="M6 0l5 6H1zM6 7l6 7H0z" fill="currentColor"/></svg>
          <svg class="mt-[14px] mb-[15px] w-[12px] h-[14px]" viewBox="0 0 12 14"><path d="M1 0h10L6 6zM0 7h12l-6 7z" fill="currentColor"/></svg>
        </div>
      </div>
      <div class="h-[57px] shrink-0 border-t border-[#c6ced2]">
        <input type="text" aria-label="备注" placeholder="单击此处添加备注" class="w-full h-[46px] pl-[12px] text-[23px] placeholder:text-[#7f888c] bg-transparent outline-none" />
      </div>
    </main>
  </div>

  <!-- Status bar -->
  <footer class="h-[42px] shrink-0 flex items-center pl-[22px] pr-[32px] border-t border-[#c6ced2] whitespace-nowrap">
    <span>幻灯片 3 / 10</span>
    <span class="ml-[19px] w-px h-[26px] bg-[#c6ced2]"></span>
    <button class="ml-[25px] flex items-center gap-[8px]"><svg class="w-[26px] h-[26px]" viewBox="0 0 26 26" fill="none" stroke="currentColor" stroke-width="2"><path d="M7 24V11l-3 1-3-5 7-5c2 3 7 3 9 0l7 5-3 5-3-1M7 24h6M18 14l2 4 4 1-3 3 1 4-4-2-4 1 1-4-3-3 4-1z"/></svg>华丽</button>
    <span class="ml-[23px] w-px h-[26px] bg-[#c6ced2]"></span>
    <button class="ml-[29px] flex items-center gap-[12px]"><svg class="w-[20px] h-[20px]" viewBox="0 0 20 20"><path d="M10 1l9 17a1 1 0 0 1-1 1H2a1 1 0 0 1-1-1z" fill="#f5b93d"/><path d="M10 7v6M10 15v2" stroke="#6b4310" stroke-width="2"/></svg>缺失字体</button>

    <button class="ml-auto flex items-center gap-[8px]"><svg class="w-[24px] h-[24px]" viewBox="0 0 24 24" fill="none" stroke="currentColor" stroke-width="2"><path d="M2 6v13l9 4 10-4v-6M2 9l9 3 10-3V6M5 5l6-4 6 4"/></svg>智能美化<svg class="w-[12px] h-[12px]"><use href="#chev"/></svg></button>
    <span class="ml-[23px] w-px h-[26px] bg-[#c6ced2]"></span>
    <button class="ml-[26px] flex items-center gap-[8px]"><svg class="w-[24px] h-[22px]" viewBox="0 0 24 22" fill="none" stroke="currentColor" stroke-width="2"><path d="M1 2h10M14 1l4 4 4-4M4 11h19M1 21h22"/></svg>备注<svg class="w-[12px] h-[12px]"><use href="#chev"/></svg></button>
    <button class="ml-[34px] flex items-center gap-[7px]"><svg class="w-[26px] h-[24px]" viewBox="0 0 26 24" fill="none" stroke="currentColor" stroke-width="2"><path d="M13 19H7l-4 4V1h20v12M20 15v9M15 20h10"/></svg>批注</button>
    <span class="ml-[24px] w-px h-[26px] bg-[#c6ced2]"></span>
    <button aria-label="普通视图" class="ml-[14px] w-[42px] h-[42px] flex items-center justify-center rounded bg-[#c6d0d2]"><svg class="w-[24px] h-[22px]" viewBox="0 0 24 22" fill="none" stroke="currentColor" stroke-width="2"><path d="M1 1h22v20H1zM7 5v12"/></svg></button>
    <button aria-label="浏览视图" class="ml-[23px]"><svg class="w-[24px] h-[22px]" viewBox="0 0 24 22" fill="none" stroke="currentColor" stroke-width="2"><path d="M1 1h8v7H1zM15 1h8v7h-8zM1 14h8v7H1zM15 14h8v7h-8z"/></svg></button>
    <button aria-label="阅读视图" class="ml-[32px]"><svg class="w-[24px] h-[22px]" viewBox="0 0 24 22" fill="none" stroke="currentColor" stroke-width="2"><path d="M12 21l-3-3H1V2h8l3 3 3-3h8v16h-8zM12 5v14"/></svg></button>
    <span class="ml-[22px] w-px h-[26px] bg-[#c6ced2]"></span>
    <button aria-label="放映" class="ml-[19px] w-[34px] h-[31px] flex items-center justify-center rounded bg-[#de6a1e]"><svg class="w-[12px] h-[14px]" viewBox="0 0 12 14"><path d="M1 0l11 7-11 7z" fill="#fff"/></svg></button>
    <svg class="ml-[14px] w-[12px] h-[12px]"><use href="#chev"/></svg>
    <span class="ml-[22px] w-px h-[26px] bg-[#c6ced2]"></span>
    <button aria-label="适应窗口" class="ml-[24px]"><svg class="w-[24px] h-[24px]" viewBox="0 0 24 24" fill="none" stroke="currentColor" stroke-width="2"><path d="M1 7V4l3-3h3M17 1h3l3 3v3M23 17v3l-3 3h-3M7 23H4l-3-3v-3M7 7h10v10H7z"/></svg></button>
    <span class="ml-[41px]">95%</span>
    <svg class="ml-[25px] w-[11px] h-[11px]"><use href="#chev"/></svg>
    <button aria-label="缩小" class="ml-[32px]"><svg class="w-[21px] h-[20px]" viewBox="0 0 21 20" stroke="#333" stroke-width="3.500"><path d="M0 10h21"/></svg></button>
    <input type="range" aria-label="缩放" min="0" max="100" value="47" class="ml-[24px] w-[185px] h-[3px] appearance-none bg-linear-to-r from-[#2460ae] from-47% to-[#b3bbbe] to-47% [&::-webkit-slider-thumb]:appearance-none [&::-webkit-slider-thumb]:size-[18px] [&::-webkit-slider-thumb]:rounded-full [&::-webkit-slider-thumb]:bg-[#8a8a8a] [&::-webkit-slider-thumb]:border-5 [&::-webkit-slider-thumb]:border-white [&::-webkit-slider-thumb]:shadow" />
    <button aria-label="放大" class="ml-[26px]"><svg class="w-[18px] h-[18px]" viewBox="0 0 18 18" stroke="#333" stroke-width="3"><path d="M9 0v18M0 9h18"/></svg></button>
  </footer>

  <!-- Floating widgets -->
  <button class="absolute right-0 top-[660px] w-[87px] h-[63px] flex items-center rounded-l-[14px] border-2 border-r-0 border-[#2a9cf0] bg-[#eff8ff] overflow-hidden text-[#1d86dc] font-bold">
    <span class="w-[64px] h-full shrink-0 flex items-center justify-center rounded-r-[10px] bg-linear-to-tr from-[#3db0f5] to-[#0b8bf8]"><svg class="w-[38px] h-[32px]" viewBox="0 0 38 32" fill="none" stroke="#fff" stroke-width="5"><circle cx="19" cy="10" r="7"/><path d="M14 25a7 7 0 1 1-1-8c4 3 8-2 12-1a7 7 0 1 1-1 9"/><path d="M13 25l9-8"/></svg></span>
    <span class="ml-[12px]">拖</span>
  </button>

  <!-- Watermark rows, filled below -->
  <div id="watermark" aria-hidden="true" class="absolute inset-x-0 top-[66px] bottom-[16px] overflow-hidden pointer-events-none text-[36px] text-black/15 whitespace-nowrap"></div>

  <div class="absolute right-[9px] top-[1374px] w-[105px] h-[44px] flex items-center justify-center gap-[7px] rounded-lg bg-black shadow-lg text-[22px] text-white font-['Liberation_Sans','Noto_Sans_CJK_SC',sans-serif]">
    CH
    <svg class="w-[19px] h-[21px]" viewBox="0 0 19 21" fill="none" stroke="#ddd" stroke-width="2"><path d="M11 1c9 3 9 15 1 18-4 1-8 0-11-4 8 1 12-5 10-14z"/></svg>
    <span class="text-[#999]">简</span>
  </div>

  <!-- Capture frame -->
  <div class="absolute inset-x-0 top-[66px] bottom-[22px] pointer-events-none flex flex-col justify-between">
    <div>
      <div class="h-[2px] bg-[repeating-linear-gradient(90deg,#3391ab_0_12px,#c8f0f2_12px_15px)]"></div>
      <div class="flex justify-between">
        <span class="w-[36px] h-[38px] border-t-5 border-l-2 border-[#1a98e0]"></span>
        <span class="w-[39px] h-[38px] border-t-5 border-r-4 border-[#0a97e8]"></span>
      </div>
    </div>
    <div>
      <div class="flex justify-between">
        <span class="w-[36px] h-[38px] border-b-5 border-l-2 border-[#1a98e0]"></span>
        <span class="w-[39px] h-[38px] border-b-5 border-r-4 border-[#0a97e8]"></span>
      </div>
      <div class="h-[2px] bg-[repeating-linear-gradient(90deg,#2f97ad_0_12px,#c8f0f2_12px_15px)]"></div>
    </div>
  </div>

  <!-- Taskbar -->
  <div class="h-[16px] shrink-0 flex items-end overflow-hidden bg-linear-to-r from-[#17262d] to-[#22343c]">
    <span class="ml-[190px] w-[20px] h-[2px] rounded-t-full bg-[#8fa05a]"></span>
    <span class="ml-[45px] w-[20px] h-[2px] rounded-t-full bg-[#3fb0b0]"></span>
    <span class="ml-[50px] w-[20px] h-[2px] rounded-t-full bg-[#c04050]"></span>
    <span class="ml-[50px] w-[20px] h-[2px] rounded-t-full bg-[#2a7aa8]"></span>
    <span class="ml-[40px] w-[42px] h-[2px] bg-[#555b60]"></span>
    <span class="ml-[15px] w-[68px] h-full bg-[#4d575d]"></span>
    <span class="ml-[2px] w-[68px] h-full bg-[#a8662f]"></span>
    <span class="ml-[86px] w-[40px] h-[2px] rounded-t-full bg-white"></span>
    <span class="ml-[16px] w-[68px] h-full bg-[#a8662f]"></span>
    <span class="ml-[62px] w-[30px] h-full flex items-end justify-center bg-[#f1f1f1]"><svg class="w-[8px] h-[5px]" viewBox="0 0 8 5"><path d="M4 0l4 5H0z" fill="#444"/></svg></span>
    <span class="ml-auto mr-[125px] h-[8px] text-[20px] leading-[20px] text-white">21:06</span>
    <span class="w-px h-full mr-[6px] bg-[#8a969b]"></span>
  </div>

  <script>
    const watermark = document.getElementById('watermark');
    for (let row = 0; row < 13; row++) {
      const line = document.createElement('div');
      line.className = row % 2 ? 'flex h-[126px] -ml-[108px]' : 'flex h-[126px] ml-[24px]';
      for (let i = 0; i < 10; i++) {
        const mark = document.createElement('span');
        mark.className = 'w-[265px] shrink-0 leading-[40px]';
        mark.textContent = 'code51.cn';
        line.appendChild(mark);
      }
      watermark.appendChild(line);
    }
  </script>
</body>
</html>
